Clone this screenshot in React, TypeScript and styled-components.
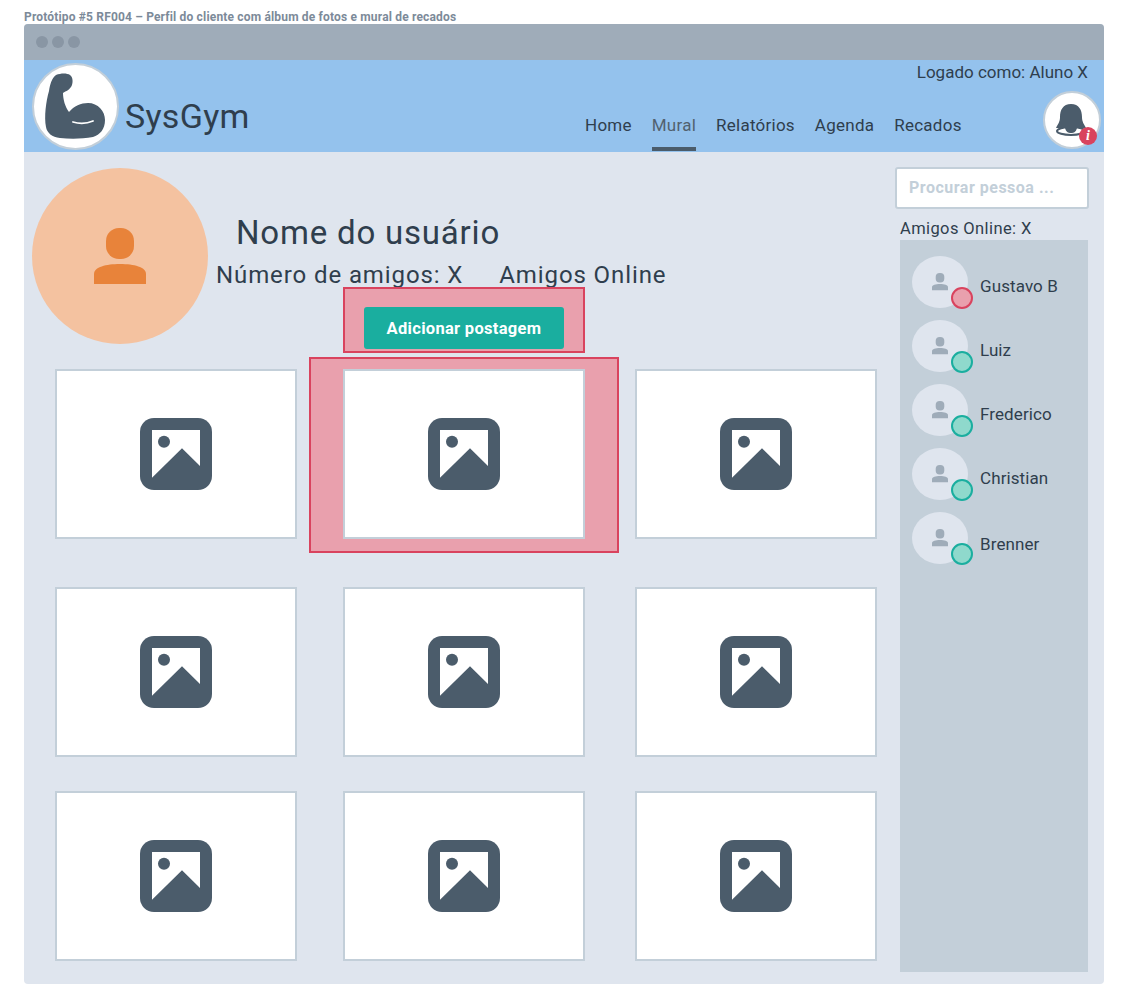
import React from "react";
import styled, { createGlobalStyle } from "styled-components";

const GlobalStyle = createGlobalStyle`
    html, body {
        margin: 0;
        padding: 0;
        background: #fff;
    }
    body {
        font-family: Roboto, "Liberation Sans", sans-serif;
        color: #2f3e4d;
    }
`;

const Page = styled.div`
    width: 1128px;
    height: 1008px;
    padding: 10px 24px 0;
    box-sizing: border-box;
    overflow: hidden;
`;

const Caption = styled.div`
    height: 14px;
    font-size: 12px;
    line-height: 14px;
    font-weight: 700;
    letter-spacing: 0.17px;
    color: #7c8a99;
`;

const Window = styled.div`
    width: 1080px;
    height: 960px;
    border-radius: 4px;
    overflow: hidden;
    background: #dfe5ee;
    display: flex;
    flex-direction: column;
`;

const TitleBar = styled.div`
    height: 36px;
    flex: none;
    background: #9facb9;
    display: flex;
    align-items: center;
    gap: 4px;
    padding-left: 12px;
`;

const Dot = styled.span`
    width: 12px;
    height: 12px;
    border-radius: 50%;
    background: #8996a4;
`;

const Header = styled.header`
    height: 92px;
    flex: none;
    background: #94c2ed;
    display: flex;
    padding-left: 8px;
`;

const LogoCircle = styled.div`
    width: 87px;
    height: 87px;
    margin-top: 3px;
    box-sizing: border-box;
    border: 2px solid #c3cfd9;
    border-radius: 50%;
    background: #fff;
    flex: none;
`;

const Brand = styled.div`
    font-size: 34px;
    line-height: 42px;
    margin: 35px 0 0 6px;
    color: #2f3e4d;
    letter-spacing: 0.3px;
    width: 460px;
    flex: none;
`;

const HeaderRight = styled.div`
    flex: 1;
    display: flex;
    flex-direction: column;
    padding-right: 3px;
`;

const Logged = styled.div`
    height: 31px;
    font-size: 17px;
    line-height: 24px;
    text-align: right;
    padding-right: 13px;
`;

const HeaderRow = styled.div`
    flex: 1;
    display: flex;
    justify-content: space-between;
    align-items: flex-start;
`;

const Nav = styled.nav`
    display: flex;
    gap: 20px;
    height: 44px;
    margin-top: 16px;
`;

const NavItem = styled.a<{ $active?: boolean }>`
    font-size: 17px;
    line-height: 28px;
    letter-spacing: 0.25px;
    padding-top: 4px;
    box-sizing: border-box;
    height: 44px;
    color: ${p => (p.$active ? "#52616f" : "#2f3e4d")};
    border-bottom: 4px solid ${p => (p.$active ? "#4b5c6b" : "transparent")};
`;

const BellCircle = styled.div`
    position: relative;
    width: 58px;
    height: 58px;
    box-sizing: border-box;
    border: 2px solid #c3cfd9;
    border-radius: 50%;
    background: #fff;
`;

const Badge = styled.span`
    position: absolute;
    right: 2px;
    bottom: 2px;
    width: 18px;
    height: 18px;
    border-radius: 50%;
    background: #d9435e;
    color: #fff;
    font-family: "Liberation Serif", serif;
    font-style: italic;
    font-weight: 700;
    font-size: 14px;
    line-height: 18px;
    text-align: center;
`;

const Body = styled.div`
    flex: 1;
    display: flex;
`;

const Main = styled.main`
    width: 871px;
    flex: none;
    padding: 16px 0 0 8px;
    box-sizing: border-box;
`;

const Profile = styled.section`
    display: flex;
    height: 201px;
`;

const BigAvatar = styled.div`
    width: 176px;
    height: 176px;
    flex: none;
    border-radius: 50%;
    background: #f4c2a0;
    display: flex;
    align-items: center;
    justify-content: center;
`;

const ProfileInfo = styled.div`
    padding-left: 8px;
    display: flex;
    flex-direction: column;
`;

const UserName = styled.h1`
    margin: 45px 0 0 20px;
    font-size: 33px;
    line-height: 40px;
    font-weight: 400;
    letter-spacing: 0.8px;
    color: #2f3e4d;
`;

const Stats = styled.div`
    display: flex;
    gap: 36px;
    margin-top: 7px;
    font-size: 24px;
    line-height: 30px;
    letter-spacing: 0.9px;
`;

const ButtonHighlight = styled.div`
    width: 242px;
    height: 66px;
    margin: -3px 0 0 127px;
    padding-bottom: 2px;
    box-sizing: border-box;
    background: #e9a0ad;
    border: 2px solid #d9435e;
    display: flex;
    align-items: flex-end;
    justify-content: center;
`;

const AddButton = styled.button`
    width: 200px;
    height: 42px;
    border: none;
    border-radius: 3px;
    background: #1aae9f;
    color: #fff;
    font-family: inherit;
    font-size: 16.5px;
    font-weight: 700;
    letter-spacing: 0.3px;
    padding: 0;
`;

const Gallery = styled.div`
    display: grid;
    grid-template-columns: 288px 292px 242px;
    grid-template-rows: 218px 204px 170px;
    margin-left: 23px;
    position: relative;
    z-index: 0;
`;

const Card = styled.div<{ $highlight?: boolean }>`
    position: relative;
    width: 242px;
    height: 170px;
    box-sizing: border-box;
    background: #fff;
    border: 2px solid #c3cfd9;
    display: flex;
    align-items: center;
    justify-content: center;
    ${p =>
        p.$highlight &&
        `
        &::before {
            content: "";
            position: absolute;
            top: -14px;
            bottom: -16px;
            left: -36px;
            right: -36px;
            background: #e9a0ad;
            border: 2px solid #d9435e;
            z-index: -1;
        }
    `}
`;

const Sidebar = styled.aside`
    flex: 1;
    display: flex;
    flex-direction: column;
    padding-top: 15px;
`;

const Search = styled.div`
    width: 194px;
    height: 42px;
    box-sizing: border-box;
    border: 2px solid #c3cfd9;
    border-radius: 3px;
    background: #fff;
    padding-left: 12px;
    font-size: 16px;
    font-weight: 700;
    letter-spacing: 0.5px;
    line-height: 38px;
    color: #c3cfd9;
`;

const OnlineLabel = styled.div`
    margin: 10px 0 0 5px;
    height: 21px;
    font-size: 16.5px;
    line-height: 20px;
    letter-spacing: 0.4px;
`;

const FriendPanel = styled.div`
    width: 188px;
    height: 732px;
    margin-left: 5px;
    padding: 16px 0 0 12px;
    box-sizing: border-box;
    background: #c3cfd9;
    display: flex;
    flex-direction: column;
    gap: 12px;
`;

const Friend = styled.div`
    display: flex;
    align-items: center;
    gap: 12px;
    height: 52px;
    font-size: 17px;
    letter-spacing: 0.1px;
`;

const FriendName = styled.span<{ $drop: number }>`
    padding-top: ${p => p.$drop}px;
`;

const FriendAvatar = styled.div`
    position: relative;
    width: 56px;
    height: 52px;
    border-radius: 50%;
    background: #dfe5ee;
    display: flex;
    align-items: center;
    justify-content: center;
    flex: none;
`;

const Status = styled.span<{ $busy?: boolean }>`
    position: absolute;
    right: -5px;
    bottom: -1px;
    width: 22px;
    height: 22px;
    box-sizing: border-box;
    border-radius: 50%;
    border: 2px solid ${p => (p.$busy ? "#d9435e" : "#1aae9f")};
    background: ${p => (p.$busy ? "#e9a0ad" : "#8fd9cc")};
`;

const PersonIcon = ({ size, color }: { size: number; color: string }) => (
    <svg width={size} height={(size * 56) / 52} viewBox="0 0 52 56" fill={color}>
        <rect x="12" y="0" width="28" height="31" rx="13" />
        <path d="M0 56V46C0 39 12 36 26 36S52 39 52 46V56Z" />
    </svg>
);

const ImageIcon = () => (
    <svg width="72" height="72" viewBox="0 0 72 72">
        <rect width="72" height="72" rx="14" fill="#4b5c6b" />
        <path d="M12 12H60V48L42 30.3L12 59.7Z" fill="#fff" />
        <circle cx="24" cy="23.7" r="6" fill="#4b5c6b" />
    </svg>
);

const MuscleIcon = () => (
    <svg width="83" height="83" viewBox="0 0 83 83">
        <path
            d="M22 10C27 8 33 8 36 10C39 12 39 17 38 20C36 25 32 26 29 28C29 34 31 42 35 47C40 41 47 38 54 38C64 38 71 46 71 55C71 64 66 70 59 72C48 74 36 74 26 73C18 72 13 68 12 62C10 52 12 36 15 26C16 19 18 13 22 10Z"
            fill="#4b5c6b"
        />
        <path d="M39 57C46 59 53 58.500 59 56" stroke="#fff" strokeWidth="1.8" strokeLinecap="round" fill="none" />
    </svg>
);

const BellIcon = () => (
    <svg width="54" height="54" viewBox="0 0 54 54">
        <ellipse cx="26" cy="38" rx="14" ry="4" fill="#fff" stroke="#4b5c6b" strokeWidth="2" />
        <path
            d="M26 11C34 11 37 17 37 24C37 29 39 31 41 35H11C13 31 15 29 15 24C15 17 18 11 26 11Z"
            fill="#4b5c6b"
        />
        <path d="M20 35H32C31 39 29 40 26 40S21 39 20 35Z" fill="#4b5c6b" />
    </svg>
);

const NAV = ["Home", "Mural", "Relatórios", "Agenda", "Recados"];
const FRIENDS = [
    { name: "Gustavo B", drop: 8 },
    { name: "Luiz", drop: 8 },
    { name: "Frederico", drop: 8 },
    { name: "Christian", drop: 8 },
    { name: "Brenner", drop: 12 },
];

function App() {
    return (
        <Page>
            <GlobalStyle />
            <Caption>Protótipo #5 RF004 – Perfil do cliente com álbum de fotos e mural de recados</Caption>
            <Window>
                <TitleBar>
                    <Dot />
                    <Dot />
                    <Dot />
                </TitleBar>
                <Header>
                    <LogoCircle>
                        <MuscleIcon />
                    </LogoCircle>
                    <Brand>SysGym</Brand>
                    <HeaderRight>
                        <Logged>Logado como: Aluno X</Logged>
                        <HeaderRow>
                            <Nav>
                                {NAV.map(item => (
                                    <NavItem key={item} $active={item === "Mural"}>
                                        {item}
                                    </NavItem>
                                ))}
                            </Nav>
                            <BellCircle>
                                <BellIcon />
                                <Badge>i</Badge>
                            </BellCircle>
                        </HeaderRow>
                    </HeaderRight>
                </Header>
                <Body>
                    <Main>
                        <Profile>
                            <BigAvatar>
                                <PersonIcon size={52} color="#e8833a" />
                            </BigAvatar>
                            <ProfileInfo>
                                <UserName>Nome do usuário</UserName>
                                <Stats>
                                    <span>Número de amigos: X</span>
                                    <span>Amigos Online</span>
                                </Stats>
                                <ButtonHighlight>
                                    <AddButton>Adicionar postagem</AddButton>
                                </ButtonHighlight>
                            </ProfileInfo>
                        </Profile>
                        <Gallery>
                            {Array.from({ length: 9 }).map((_, i) => (
                                <Card key={i} $highlight={i === 1}>
                                    <ImageIcon />
                                </Card>
                            ))}
                        </Gallery>
                    </Main>
                    <Sidebar>
                        <Search>Procurar pessoa ...</Search>
                        <OnlineLabel>Amigos Online: X</OnlineLabel>
                        <FriendPanel>
                            {FRIENDS.map((friend, i) => (
                                <Friend key={friend.name}>
                                    <FriendAvatar>
                                        <PersonIcon size={16} color="#9facb9" />
                                        <Status $busy={i === 0} />
                                    </FriendAvatar>
                                    <FriendName $drop={friend.drop}>{friend.name}</FriendName>
                                </Friend>
                            ))}
                        </FriendPanel>
                    </Sidebar>
                </Body>
            </Window>
        </Page>
    );
}

export default App;
